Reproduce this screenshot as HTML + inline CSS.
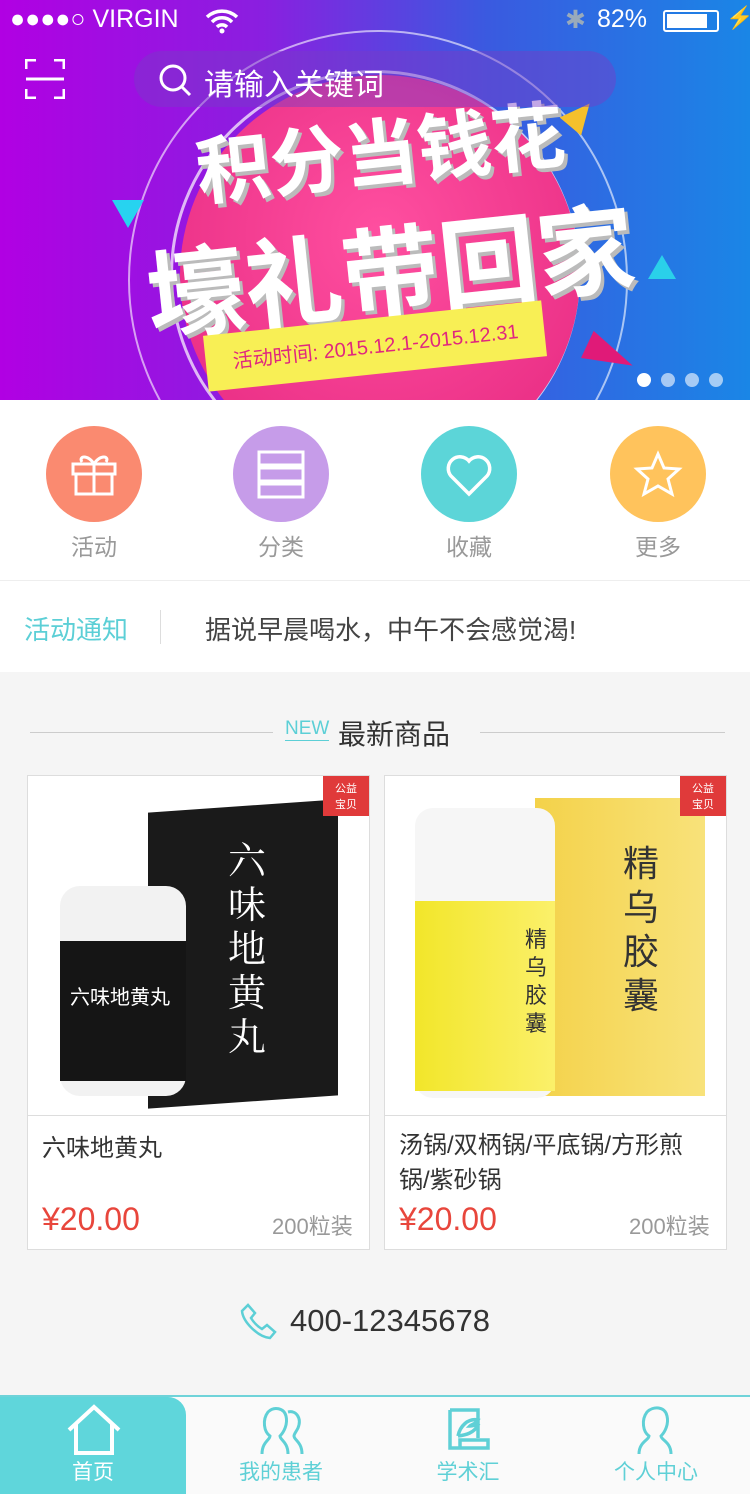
<!DOCTYPE html><html><head><meta charset="utf-8"><style>
*{margin:0;padding:0;box-sizing:border-box}
body{width:750px;height:1494px;position:relative;background:#f5f5f5;font-family:"Liberation Sans","Noto Sans CJK SC",sans-serif;overflow:hidden}
.a{position:absolute}
.banner{left:0;top:0;width:750px;height:400px;background:linear-gradient(90deg,#b100e3 0%,#8a1fe0 35%,#3a5ae0 65%,#1a86e6 100%);overflow:hidden}
.ic{width:96px;height:96px;border-radius:50%;top:426px}
.lb{top:528px;font-size:23px;color:#999;width:120px;text-align:center}
.card{background:#fff;border:1px solid #ddd;width:343px;height:475px;top:775px}
.price{color:#e8463c;font-size:32px}
.tab{font-size:21px;color:#5fd0d6;width:150px;text-align:center;top:1456px}
</style></head><body>
<div class="a banner">
 <div class="a" style="left:170px;top:70px;width:410px;height:410px;border-radius:50%;border:3px solid rgba(255,255,255,.7)"></div>
 <div class="a" style="left:128px;top:30px;width:500px;height:500px;border-radius:50%;border:2px solid rgba(255,255,255,.6)"></div>
 <div class="a" style="left:180px;top:75px;width:400px;height:400px;border-radius:50%;background:radial-gradient(circle at 50% 40%,#ff4fa0,#e4267e)"></div>
 <div class="a" style="left:195px;top:95px;font-size:74px;font-weight:bold;color:#fff;transform:rotate(-6deg);text-shadow:3px 4px 0 #bbb">积分当钱花</div>
 <div class="a" style="left:145px;top:195px;font-size:98px;font-weight:bold;color:#fff;transform:rotate(-6deg);text-shadow:3px 4px 0 #bbb">壕礼带回家</div>
 <div class="a" style="left:205px;top:318px;width:340px;height:56px;background:#f8ef55;transform:rotate(-6deg)"></div>
 <div class="a" style="left:232px;top:330px;font-size:20px;color:#e0267e;transform:rotate(-6deg)">活动时间: 2015.12.1-2015.12.31</div>
 <div class="a" style="left:112px;top:200px;width:0;height:0;border-left:16px solid transparent;border-right:16px solid transparent;border-top:28px solid #27d3f0"></div>
 <div class="a" style="left:566px;top:100px;width:0;height:0;border-left:14px solid transparent;border-right:14px solid transparent;border-bottom:30px solid #f5c02c;transform:rotate(40deg)"></div>
 <div class="a" style="left:585px;top:340px;width:0;height:0;border-top:15px solid transparent;border-bottom:15px solid transparent;border-left:50px solid #e01a78;transform:rotate(25deg)"></div>
 <div class="a" style="left:648px;top:255px;width:0;height:0;border-left:14px solid transparent;border-right:14px solid transparent;border-bottom:24px solid #2ad0ea"></div>
 <div class="a" style="left:0;top:0;width:750px;height:40px;color:#fff;font-size:25px">
  <span class="a" style="left:10px;top:5px">●●●●○ VIRGIN</span>
  <svg class="a" style="left:205px;top:8px" width="34" height="26" viewBox="0 0 34 26"><path d="M2 9a22 22 0 0 1 30 0M7 14a14 14 0 0 1 20 0M12 19a7 7 0 0 1 10 0" stroke="#fff" stroke-width="3.5" fill="none"/><circle cx="17" cy="23" r="2.5" fill="#fff"/></svg>
  <span class="a" style="left:565px;top:5px;color:#9ab">✱</span>
  <span class="a" style="left:597px;top:5px">82%</span>
  <div class="a" style="left:663px;top:10px;width:56px;height:22px;border:2px solid #fff;border-radius:3px;padding:2px"><div style="width:40px;height:14px;background:#fff"></div></div>
  <span class="a" style="left:726px;top:5px;font-size:22px">⚡</span>
 </div>
 <svg class="a" style="left:25px;top:59px" width="40" height="40" viewBox="0 0 40 40" fill="none" stroke="#fff" stroke-width="3"><path d="M1 10V1h10M29 1h10v9M1 30v9h10M29 39h10v-9M1 20h38"/></svg>
 <div class="a" style="left:134px;top:51px;width:482px;height:56px;border-radius:28px;background:rgba(120,60,200,.45)"></div>
 <svg class="a" style="left:157px;top:62px" width="36" height="36" viewBox="0 0 36 36" fill="none" stroke="#fff" stroke-width="3"><circle cx="16" cy="16" r="12"/><path d="M25 25l8 8"/></svg>
 <div class="a" style="left:204px;top:60px;font-size:30px;color:#fff">请输入关键词</div>
 <div class="a" style="left:637px;top:373px;width:90px;height:16px">
  <span class="a" style="left:0;width:14px;height:14px;border-radius:50%;background:#fff"></span>
  <span class="a" style="left:24px;width:14px;height:14px;border-radius:50%;background:rgba(255,255,255,.6)"></span>
  <span class="a" style="left:48px;width:14px;height:14px;border-radius:50%;background:rgba(255,255,255,.6)"></span>
  <span class="a" style="left:72px;width:14px;height:14px;border-radius:50%;background:rgba(255,255,255,.6)"></span>
 </div>
</div>
<div class="a" style="left:0;top:400px;width:750px;height:272px;background:#fff"></div>
<div class="a ic" style="left:46px;background:#fa8a70"><svg width="96" height="96" viewBox="0 0 96 96" fill="none" stroke="#fff" stroke-width="3"><rect x="27" y="38" width="42" height="10"/><rect x="30" y="48" width="36" height="20"/><path d="M48 38v30M48 38c-6-10-16-8-12-2M48 38c6-10 16-8 12-2"/></svg></div>
<div class="a ic" style="left:233px;background:#c69ce9"><svg width="96" height="96" viewBox="0 0 96 96" fill="none" stroke="#fff" stroke-width="3"><rect x="26" y="26" width="44" height="13"/><rect x="26" y="42" width="44" height="13"/><rect x="26" y="58" width="44" height="13"/></svg></div>
<div class="a ic" style="left:421px;background:#5cd5d8"><svg width="96" height="96" viewBox="0 0 96 96" fill="none" stroke="#fff" stroke-width="3.5"><path d="M48 68L30 50a11 11 0 0 1 18-15a11 11 0 0 1 18 15z"/></svg></div>
<div class="a ic" style="left:610px;background:#ffc35c"><svg width="96" height="96" viewBox="0 0 96 96" fill="none" stroke="#fff" stroke-width="3"><path d="M48 28l6 14 15 1-11 10 4 15-14-8-14 8 4-15-11-10 15-1z"/></svg></div>
<div class="a lb" style="left:34px">活动</div>
<div class="a lb" style="left:221px">分类</div>
<div class="a lb" style="left:409px">收藏</div>
<div class="a lb" style="left:598px">更多</div>
<div class="a" style="left:0;top:580px;width:750px;height:1px;background:#eee"></div>
<div class="a" style="left:24px;top:610px;font-size:26px;color:#5ccfd6">活动通知</div>
<div class="a" style="left:160px;top:610px;width:1px;height:34px;background:#ddd"></div>
<div class="a" style="left:205px;top:610px;font-size:26px;color:#444">据说早晨喝水，中午不会感觉渴!</div>
<div class="a" style="left:30px;top:732px;width:243px;height:1px;background:#ccc"></div>
<div class="a" style="left:480px;top:732px;width:245px;height:1px;background:#ccc"></div>
<div class="a" style="left:285px;top:718px;font-size:19px;color:#5ccfd6;border-bottom:1px solid #5ccfd6">NEW</div>
<div class="a" style="left:338px;top:713px;font-size:28px;color:#333">最新商品</div>
<div class="a card" style="left:27px">
 <div class="a" style="left:0;top:0;width:341px;height:340px;background:#fff;border-bottom:1px solid #ddd"></div>
 <div class="a" style="left:120px;top:30px;width:190px;height:296px;background:#1a1a1a;transform:skewY(-4deg)"></div>
 <div class="a" style="left:200px;top:60px;width:40px;font-size:38px;color:#fff;line-height:44px;font-family:'Noto Serif CJK SC',serif">六味地黄丸</div>
 <div class="a" style="left:32px;top:110px;width:126px;height:210px;border-radius:20px;background:#f2f2f2"></div>
 <div class="a" style="left:32px;top:165px;width:126px;height:140px;background:#151515"></div>
 <div class="a" style="left:42px;top:205px;font-size:20px;color:#fff">六味地黄丸</div>
 <div class="a" style="left:295px;top:0;width:46px;height:40px;background:#e03a3a;font-size:11px;color:#fff;text-align:center;padding-top:4px">公益<br>宝贝</div>
 <div class="a" style="left:14px;top:352px;font-size:24px;color:#333">六味地黄丸</div>
 <div class="a price" style="left:14px;top:425px">¥20.00</div>
 <div class="a" style="left:244px;top:433px;font-size:22px;color:#999">200粒装</div>
</div>
<div class="a card" style="left:384px">
 <div class="a" style="left:0;top:0;width:341px;height:340px;border-bottom:1px solid #ddd"></div>
 <div class="a" style="left:150px;top:22px;width:170px;height:298px;background:linear-gradient(90deg,#f4d24a,#f8e27a)"></div>
 <div class="a" style="left:238px;top:66px;width:40px;font-size:36px;color:#333;line-height:44px">精乌胶囊</div>
 <div class="a" style="left:30px;top:32px;width:140px;height:290px;border-radius:18px;background:#f6f6f6"></div>
 <div class="a" style="left:30px;top:125px;width:140px;height:190px;background:linear-gradient(90deg,#f2e62a,#fbf06a)"></div>
 <div class="a" style="left:140px;top:150px;width:30px;font-size:22px;line-height:28px;color:#333">精乌胶囊</div>
 <div class="a" style="left:295px;top:0;width:46px;height:40px;background:#e03a3a;font-size:11px;color:#fff;text-align:center;padding-top:4px">公益<br>宝贝</div>
 <div class="a" style="left:14px;top:352px;font-size:24px;line-height:35px;color:#333;white-space:nowrap">汤锅/双柄锅/平底锅/方形煎<br>锅/紫砂锅</div>
 <div class="a price" style="left:14px;top:425px">¥20.00</div>
 <div class="a" style="left:244px;top:433px;font-size:22px;color:#999">200粒装</div>
</div>
<svg class="a" style="left:240px;top:1302px" width="38" height="38" viewBox="0 0 38 38" fill="none" stroke="#5ccfd6" stroke-width="2.5"><path d="M8 3l7 8-4 5c3 5 6 8 11 11l5-4 8 7-5 6C18 35 3 20 2 9z"/></svg>
<div class="a" style="left:290px;top:1303px;font-size:31px;color:#333">400-12345678</div>
<div class="a" style="left:0;top:1395px;width:750px;height:99px;background:#fafafa;border-top:2px solid #6fd3d9"></div>
<div class="a" style="left:0;top:1397px;width:186px;height:97px;background:#5fd6db;border-radius:0 18px 0 0"></div>
<svg class="a" style="left:66px;top:1404px" width="56" height="52" viewBox="0 0 56 52" fill="none" stroke="#fff" stroke-width="4"><path d="M3 26L28 3l25 23M10 20v29h36V20"/></svg>
<div class="a tab" style="left:18px;color:#fff">首页</div>
<svg class="a" style="left:252px;top:1404px" width="60" height="52" viewBox="0 0 60 52" fill="none" stroke="#5fd0d6" stroke-width="3"><path d="M10 50c0-12 8-14 8-18-6-4-8-16-2-24 6-6 16-4 18 4 2 8-2 16-6 20 0 4 8 6 8 18M36 8c8-2 14 6 10 16-2 4-4 6-4 8 0 4 8 6 8 18"/></svg>
<div class="a tab" style="left:206px">我的患者</div>
<svg class="a" style="left:446px;top:1406px" width="48" height="48" viewBox="0 0 48 48" fill="none" stroke="#5fd0d6" stroke-width="3.5"><path d="M4 4h28v28M4 4v38h38v-8H14v8M12 30c2-10 10-18 20-16-2 4-6 4-8 6 4 0 6-2 8-1-4 8-12 10-20 11"/></svg>
<div class="a tab" style="left:393px">学术汇</div>
<svg class="a" style="left:635px;top:1404px" width="42" height="52" viewBox="0 0 42 52" fill="none" stroke="#5fd0d6" stroke-width="3"><path d="M4 50c0-12 10-14 10-18-6-4-8-16-2-24 6-6 18-6 20 4 2 8-2 16-6 20 0 4 10 6 10 18"/></svg>
<div class="a tab" style="left:581px">个人中心</div>
</body></html>
